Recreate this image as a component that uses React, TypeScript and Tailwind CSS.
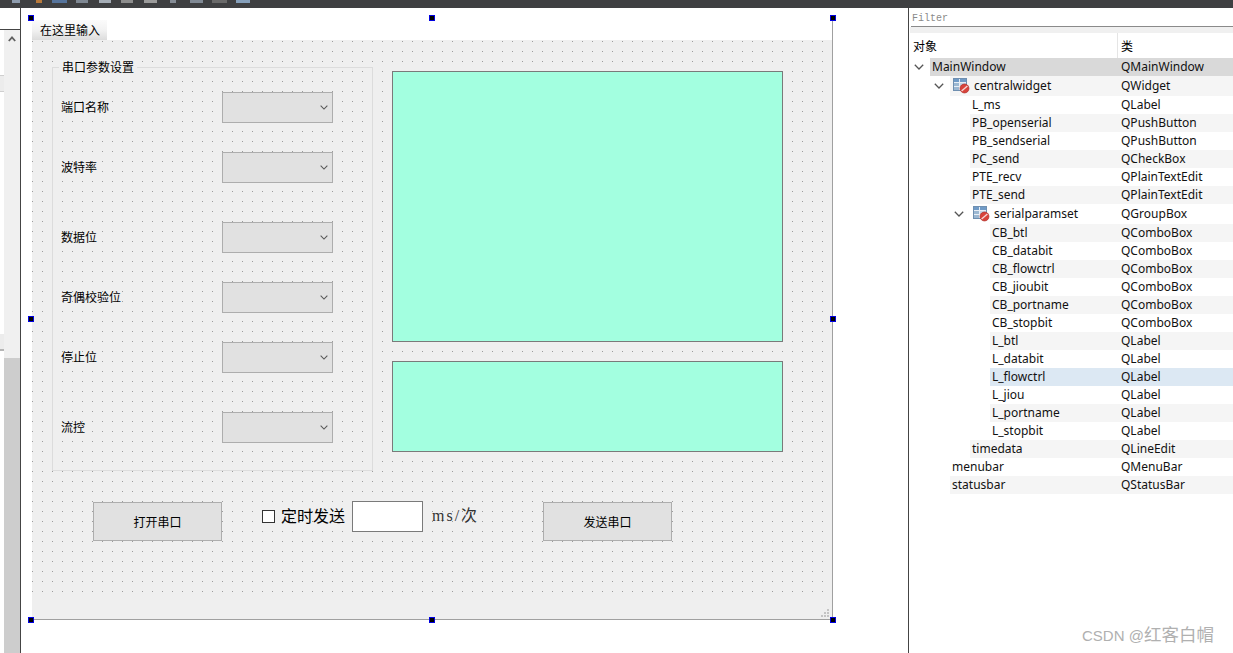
const cjk = { fontFamily: '"Noto Sans CJK SC", sans-serif' };

interface TreeRow {
  name: string;
  cls: string;
  indent: string;
  nameWidth: string;
  tone: string;
  tall?: boolean;
  chevron?: boolean;
  icon?: boolean;
}

const rows: TreeRow[] = [
  { name: "MainWindow", cls: "QMainWindow", indent: "w-[20px]", nameWidth: "w-[188px]", tone: "bg-[#d9d9d9]", chevron: true },
  { name: "centralwidget", cls: "QWidget", indent: "w-[40px]", nameWidth: "w-[168px]", tone: "bg-[#f5f5f5]", tall: true, chevron: true, icon: true },
  { name: "L_ms", cls: "QLabel", indent: "w-[60px]", nameWidth: "w-[148px]", tone: "bg-white" },
  { name: "PB_openserial", cls: "QPushButton", indent: "w-[60px]", nameWidth: "w-[148px]", tone: "bg-[#f5f5f5]" },
  { name: "PB_sendserial", cls: "QPushButton", indent: "w-[60px]", nameWidth: "w-[148px]", tone: "bg-white" },
  { name: "PC_send", cls: "QCheckBox", indent: "w-[60px]", nameWidth: "w-[148px]", tone: "bg-[#f5f5f5]" },
  { name: "PTE_recv", cls: "QPlainTextEdit", indent: "w-[60px]", nameWidth: "w-[148px]", tone: "bg-white" },
  { name: "PTE_send", cls: "QPlainTextEdit", indent: "w-[60px]", nameWidth: "w-[148px]", tone: "bg-[#f5f5f5]" },
  { name: "serialparamset", cls: "QGroupBox", indent: "w-[60px]", nameWidth: "w-[148px]", tone: "bg-white", tall: true, chevron: true, icon: true },
  { name: "CB_btl", cls: "QComboBox", indent: "w-[80px]", nameWidth: "w-[128px]", tone: "bg-[#f5f5f5]" },
  { name: "CB_databit", cls: "QComboBox", indent: "w-[80px]", nameWidth: "w-[128px]", tone: "bg-white" },
  { name: "CB_flowctrl", cls: "QComboBox", indent: "w-[80px]", nameWidth: "w-[128px]", tone: "bg-[#f5f5f5]" },
  { name: "CB_jioubit", cls: "QComboBox", indent: "w-[80px]", nameWidth: "w-[128px]", tone: "bg-white" },
  { name: "CB_portname", cls: "QComboBox", indent: "w-[80px]", nameWidth: "w-[128px]", tone: "bg-[#f5f5f5]" },
  { name: "CB_stopbit", cls: "QComboBox", indent: "w-[80px]", nameWidth: "w-[128px]", tone: "bg-white" },
  { name: "L_btl", cls: "QLabel", indent: "w-[80px]", nameWidth: "w-[128px]", tone: "bg-[#f5f5f5]" },
  { name: "L_databit", cls: "QLabel", indent: "w-[80px]", nameWidth: "w-[128px]", tone: "bg-white" },
  { name: "L_flowctrl", cls: "QLabel", indent: "w-[80px]", nameWidth: "w-[128px]", tone: "bg-[#dce8f3]" },
  { name: "L_jiou", cls: "QLabel", indent: "w-[80px]", nameWidth: "w-[128px]", tone: "bg-white" },
  { name: "L_portname", cls: "QLabel", indent: "w-[80px]", nameWidth: "w-[128px]", tone: "bg-[#f5f5f5]" },
  { name: "L_stopbit", cls: "QLabel", indent: "w-[80px]", nameWidth: "w-[128px]", tone: "bg-white" },
  { name: "timedata", cls: "QLineEdit", indent: "w-[60px]", nameWidth: "w-[148px]", tone: "bg-[#f5f5f5]" },
  { name: "menubar", cls: "QMenuBar", indent: "w-[40px]", nameWidth: "w-[168px]", tone: "bg-white" },
  { name: "statusbar", cls: "QStatusBar", indent: "w-[40px]", nameWidth: "w-[168px]", tone: "bg-[#f5f5f5]" },
];

const serialFields = [
  { label: "端口名称", gap: "mt-[24px]" },
  { label: "波特率", gap: "mt-[29px]" },
  { label: "数据位", gap: "mt-[39px]" },
  { label: "奇偶校验位", gap: "mt-[29px]" },
  { label: "停止位", gap: "mt-[29px]" },
  { label: "流控", gap: "mt-[39px]" },
];

const handles = [
  "left-[28px] top-[15px]",
  "left-[429px] top-[15px]",
  "left-[830px] top-[15px]",
  "left-[28px] top-[316px]",
  "left-[830px] top-[316px]",
  "left-[28px] top-[617px]",
  "left-[429px] top-[617px]",
  "left-[830px] top-[617px]",
];

const toolbarBits = [
  "ml-[12px] w-[8px] bg-[#8e9cae]",
  "ml-[16px] w-[6px] bg-[#b87a3c]",
  "ml-[10px] w-[15px] bg-[#56749c]",
  "ml-[9px] w-[12px] bg-[#7f8893]",
  "ml-[11px] w-[12px] bg-[#a5adb6]",
  "ml-[10px] w-[12px] bg-[#8d8d8d]",
  "ml-[11px] w-[13px] bg-[#9b9b9b]",
  "ml-[13px] w-[6px] bg-[#858c95]",
  "ml-[14px] w-[13px] bg-[#808994]",
  "ml-[9px] w-[15px] bg-[#6a6a6a]",
  "ml-[9px] w-[14px] bg-[#86a0bb]",
];

function Chevron({ className }: { className?: string }) {
  return (
    <svg width="10" height="6" viewBox="0 0 10 6" className={className}>
      <polyline points="0.8,0.8 5,5 9.2,0.8" fill="none" stroke="#555" strokeWidth="1.3" />
    </svg>
  );
}

function ObjectIcon() {
  return (
    <svg width="17" height="16" viewBox="0 0 17 16" className="ml-px mr-[4px] shrink-0">
      <rect x="0.5" y="0.5" width="13" height="12" fill="#e8eef5" stroke="#6f8fb0" />
      <rect x="1" y="1" width="5" height="3" fill="#6f9ac6" />
      <rect x="7" y="1" width="6" height="3" fill="#6f9ac6" />
      <rect x="1" y="5" width="5" height="3" fill="#9cb8d2" />
      <rect x="7" y="5" width="6" height="3" fill="#c4d4e3" />
      <rect x="1" y="9" width="5" height="3" fill="#9cb8d2" />
      <circle cx="11.5" cy="10.5" r="4.5" fill="#d8433b" stroke="#a82a25" strokeWidth="0.6" />
      <line x1="8.6" y1="13" x2="14.4" y2="8" stroke="#f6d8d6" strokeWidth="1.4" />
    </svg>
  );
}

function ComboBox() {
  return (
    <div className="flex h-[31px] w-[111px] items-center justify-end border border-[#adadad] bg-[#e1e1e1] pr-[4px]">
      <Chevron className="h-[5px] w-[8px]" />
    </div>
  );
}

function PushButton({ text, className }: { text: string; className: string }) {
  return (
    <div
      className={`flex h-[39px] w-[129px] items-center justify-center border border-[#adadad] bg-[#e1e1e1] text-[12px] text-black ${className}`}
      style={cjk}
    >
      {text}
    </div>
  );
}

export default function App() {
  return (
    <div className="relative flex h-[653px] w-[1233px] flex-col overflow-hidden bg-white">
      {/* 顶部工具栏，只露出一点点 */}
      <div className="flex h-[8px] shrink-0 items-start bg-[#3f4042]">
        {toolbarBits.map((bit) => (
          <div key={bit} className={`h-[3px] ${bit}`} />
        ))}
      </div>

      <div className="flex min-h-0 flex-1">
        {/* 左侧滚动条 */}
        <div className="flex w-[21px] shrink-0 flex-col border-r border-[#444]">
          <div className="h-[22px] shrink-0 border-b border-[#444]" />
          <div className="flex flex-1">
            <div className="w-[4px] shrink-0">
              <div className="mt-[45px] h-[17px] border-y border-[#cfcfcf] bg-[#ececec]" />
              <div className="mt-[242px] h-[17px] border-b-2 border-[#b5b5b5] bg-[#ececec]" />
            </div>
            <div className="flex flex-1 flex-col bg-[#f0f0f0]">
              <div className="flex h-[328px] shrink-0 justify-center pt-[6px]">
                <svg width="8" height="6" viewBox="0 0 8 6">
                  <polyline points="0.8,5 4,1.4 7.2,5" fill="none" stroke="#606060" strokeWidth="1.8" />
                </svg>
              </div>
              <div className="flex-1 bg-[#cdcdcd]" />
            </div>
          </div>
        </div>

        {/* 设计器画布 */}
        <div className="min-w-0 flex-1 pl-[11px] pt-[12px]">
          <div className="relative flex h-[600px] w-[801px] flex-col border-b border-r border-[#a0a0a0]">
            <div
              className="flex h-[20px] w-[75px] shrink-0 items-center bg-linear-to-b from-[#fbfbfb] via-[#f2f2f2] to-[#dcdcdc] pl-[8px] text-[12px] text-black"
              style={cjk}
            >
              在这里输入
            </div>
            <div className="flex-1 bg-[#efefef]">
              <div className="h-[560px] bg-[radial-gradient(circle_at_0.5px_1.5px,#9c9c9c_0.7px,transparent_0.7px)] bg-size-[10px_10px] pl-[20px] pt-[27px]">
                <div className="flex items-start">
                  <div className="relative h-[404px] w-[321px] shrink-0 border border-[#dcdcdc] pl-[8px]">
                    <div
                      className="absolute -top-[10px] left-[6px] bg-[#efefef] px-[3px] text-[12px] leading-[18px] text-black"
                      style={cjk}
                    >
                      串口参数设置
                    </div>
                    {serialFields.map((field) => (
                      <div key={field.label} className={`flex items-center ${field.gap}`}>
                        <div className="-mt-[2px] w-[161px] text-[12px] text-black" style={cjk}>
                          {field.label}
                        </div>
                        <ComboBox />
                      </div>
                    ))}
                  </div>
                  <div className="ml-[19px] mt-[4px] flex flex-col gap-[19px]">
                    <div className="h-[271px] w-[391px] border border-[#7a7a7a] bg-[#a3ffe0]" />
                    <div className="h-[91px] w-[391px] border border-[#7a7a7a] bg-[#a3ffe0]" />
                  </div>
                </div>

                <div className="ml-[41px] mt-[30px] flex items-start">
                  <PushButton text="打开串口" className="mt-px shrink-0" />
                  <div className="ml-[40px] mt-[9px] h-[13px] w-[13px] shrink-0 border border-[#333] bg-white" />
                  <div className="ml-[6px] w-[71px] shrink-0 text-[16px] leading-[29px] text-black" style={cjk}>
                    定时发送
                  </div>
                  <div className="h-[31px] w-[71px] shrink-0 border border-[#7a7a7a] bg-white" />
                  <div
                    className="ml-[9px] w-[111px] shrink-0 text-[16px] leading-[30px] tracking-[2px] text-[#333]"
                    style={{ fontFamily: '"Liberation Serif", "Noto Sans CJK SC", serif' }}
                  >
                    ms/次
                  </div>
                  <PushButton text="发送串口" className="mt-px shrink-0" />
                </div>
              </div>
            </div>
            <svg width="9" height="9" viewBox="0 0 9 9" className="absolute bottom-[1px] right-[2px]">
              <path d="M6 0h2v2H6zM3 3h2v2H3zM6 3h2v2H6zM0 6h2v2H0zM3 6h2v2H3zM6 6h2v2H6z" fill="#c4c4c4" />
            </svg>
          </div>
        </div>

        {/* 对象查看器 */}
        <div className="flex w-[325px] shrink-0 flex-col border-l border-[#444] pl-px">
          <div
            className="ml-px flex h-[19px] shrink-0 items-center border-b border-[#8a8a8a] pl-px pt-[3px] text-[10px] text-[#8a8a8a]"
            style={{ fontFamily: '"Liberation Mono", monospace' }}
          >
            Filter
          </div>
          <div className="h-[6px] shrink-0 bg-[#f0f0f0]" />
          <div className="flex h-[25px] shrink-0 items-center text-[12px] text-black" style={cjk}>
            <div className="w-[207px] pl-[3px]">对象</div>
            <div className="h-full border-l border-[#e5e5e5] pl-[3px] leading-[25px]">类</div>
          </div>
          <div style={{ fontFamily: '"Noto Sans", sans-serif' }} className="text-[12px] text-[#111]">
            {rows.map((row) => (
              <div key={row.name} className={`flex items-center ${row.tall ? "h-[20px]" : "h-[18px]"}`}>
                <div className={`flex h-full shrink-0 items-center justify-end pr-[6px] ${row.indent}`}>
                  {row.chevron && <Chevron />}
                </div>
                <div className={`flex h-full flex-1 items-center ${row.tone}`}>
                  <div className={`flex h-full items-center pl-[2px] ${row.nameWidth}`}>
                    {row.icon && <ObjectIcon />}
                    <span>{row.name}</span>
                  </div>
                  <div className="pl-[3px]">{row.cls}</div>
                </div>
              </div>
            ))}
          </div>
        </div>
      </div>

      {/* 选中控件的八个手柄 */}
      {handles.map((pos) => (
        <div key={pos} className={`absolute h-[6px] w-[6px] border border-[#0000e0] bg-black ${pos}`} />
      ))}

      <div
        className="absolute left-[1082px] top-[625px] text-[15px] leading-[20px] text-[#b0b0b0]"
        style={{ fontFamily: '"Liberation Sans", "Noto Sans CJK SC", sans-serif' }}
      >
        CSDN @<span className="text-[17.5px]">红客白帽</span>
      </div>
    </div>
  );
}
